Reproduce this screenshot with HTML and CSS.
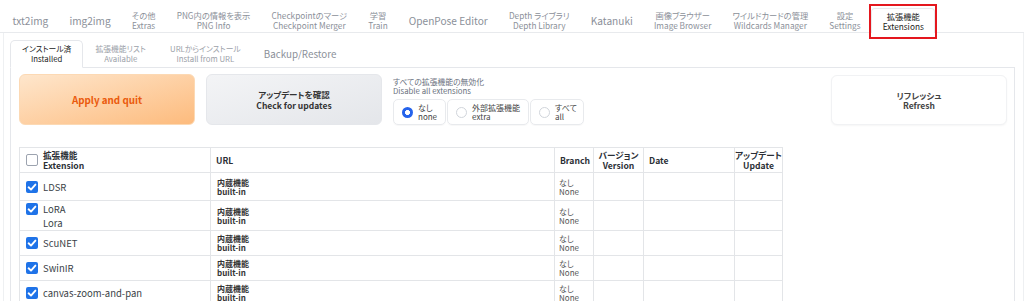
FILE: index.html
```html
<!DOCTYPE html>
<html lang="ja">
<head>
<meta charset="utf-8">
<title>Extensions</title>
<link rel="stylesheet" href="styles.css">
</head>
<body>
<nav class="topnav">
  <div class="tab one">txt2img</div>
  <div class="tab one">img2img</div>
  <div class="tab two"><span>その他</span><span>Extras</span></div>
  <div class="tab two"><span>PNG内の情報を表示</span><span>PNG Info</span></div>
  <div class="tab two"><span>Checkpointのマージ</span><span>Checkpoint Merger</span></div>
  <div class="tab two"><span>学習</span><span>Train</span></div>
  <div class="tab one">OpenPose Editor</div>
  <div class="tab two"><span>Depth ライブラリ</span><span>Depth Library</span></div>
  <div class="tab one">Katanuki</div>
  <div class="tab two"><span>画像ブラウザー</span><span>Image Browser</span></div>
  <div class="tab two"><span>ワイルドカードの管理</span><span>Wildcards Manager</span></div>
  <div class="tab two"><span>設定</span><span>Settings</span></div>
  <div class="tab two active"><span>拡張機能</span><span>Extensions</span><i class="mark"></i></div>
</nav>
<div class="outer">
  <div class="subnav">
    <div class="stab active"><span>インストール済</span><span>Installed</span></div>
    <div class="stab"><span>拡張機能リスト</span><span>Available</span></div>
    <div class="stab"><span>URLからインストール</span><span>Install from URL</span></div>
    <div class="stab single">Backup/Restore</div>
  </div>
  <div class="inner">
    <div class="actions">
      <button class="btn apply">Apply and quit</button>
      <button class="btn check"><span>アップデートを確認</span><span>Check for updates</span></button>
      <div class="radios">
        <div class="rlabel"><span>すべての拡張機能の無効化</span><span>Disable all extensions</span></div>
        <div class="ropts">
          <label class="ropt"><i class="dot on"></i><span class="rtext"><span>なし</span><span>none</span></span></label>
          <label class="ropt"><i class="dot"></i><span class="rtext"><span>外部拡張機能</span><span>extra</span></span></label>
          <label class="ropt"><i class="dot"></i><span class="rtext"><span>すべて</span><span>all</span></span></label>
        </div>
      </div>
      <button class="btn refresh"><span>リフレッシュ</span><span>Refresh</span></button>
    </div>
    <table class="ext">
      <colgroup>
        <col class="c1"><col class="c2"><col class="c3"><col class="c4"><col class="c5"><col class="c6">
      </colgroup>
      <thead>
        <tr>
          <th class="name"><span class="cb off"></span><span class="two-l"><span>拡張機能</span><span>Extension</span></span></th>
          <th class="left">URL</th>
          <th class="left">Branch</th>
          <th><span class="two-l c"><span>バージョン</span><span>Version</span></span></th>
          <th class="left">Date</th>
          <th><span class="two-l c"><span>アップデート</span><span>Update</span></span></th>
        </tr>
      </thead>
      <tbody>
        <tr class="r28">
          <td class="name"><span class="row1"><span class="cb"><svg viewBox="0 0 12 12"><polyline points="2.6,6.3 5,8.6 9.4,3.6"/></svg></span>LDSR</span></td>
          <td class="url"><span>内蔵機能</span><span>built-in</span></td>
          <td class="br"><span>なし</span><span>None</span></td>
          <td></td><td></td><td></td>
        </tr>
        <tr class="r30">
          <td class="name"><span class="row1"><span class="cb"><svg viewBox="0 0 12 12"><polyline points="2.6,6.3 5,8.6 9.4,3.6"/></svg></span>LoRA</span><span class="sub">Lora</span></td>
          <td class="url"><span>内蔵機能</span><span>built-in</span></td>
          <td class="br"><span>なし</span><span>None</span></td>
          <td></td><td></td><td></td>
        </tr>
        <tr>
          <td class="name"><span class="row1"><span class="cb"><svg viewBox="0 0 12 12"><polyline points="2.6,6.3 5,8.6 9.4,3.6"/></svg></span>ScuNET</span></td>
          <td class="url"><span>内蔵機能</span><span>built-in</span></td>
          <td class="br"><span>なし</span><span>None</span></td>
          <td></td><td></td><td></td>
        </tr>
        <tr>
          <td class="name"><span class="row1"><span class="cb"><svg viewBox="0 0 12 12"><polyline points="2.6,6.3 5,8.6 9.4,3.6"/></svg></span>SwinIR</span></td>
          <td class="url"><span>内蔵機能</span><span>built-in</span></td>
          <td class="br"><span>なし</span><span>None</span></td>
          <td></td><td></td><td></td>
        </tr>
        <tr>
          <td class="name"><span class="row1"><span class="cb"><svg viewBox="0 0 12 12"><polyline points="2.6,6.3 5,8.6 9.4,3.6"/></svg></span>canvas-zoom-and-pan</span></td>
          <td class="url"><span>内蔵機能</span><span>built-in</span></td>
          <td class="br"><span>なし</span><span>None</span></td>
          <td></td><td></td><td></td>
        </tr>
      </tbody>
    </table>
  </div>
</div>
</body>
</html>
```

FILE: styles.css
```css
* { box-sizing: border-box; }
html, body { margin: 0; padding: 0; background: #fff; }
body {
  font-family: "Noto Sans CJK JP", "Noto Sans", sans-serif;
  font-feature-settings: "palt";
  color: #374151;
  overflow: hidden;
  width: 1024px;
  height: 301px;
}

/* top navigation */
.topnav {
  display: flex;
  height: 33px;
  padding: 8px 0 0 2px;
  border-bottom: 1px solid #e8eaed;
}
.tab {
  position: relative;
  display: flex;
  flex-direction: column;
  justify-content: center;
  align-items: center;
  padding: 0 10.6px;
  height: 24px;
  color: #8b9099;
  white-space: nowrap;
}
.tab.one { font-size: 10.1px; }
.tab.two { font-size: 8.25px; line-height: 10px; }
.tab.active {
  color: #222;
  background: #fff;
  height: 25px;
  border: 1px solid #e8eaed;
  border-bottom: none;
  border-radius: 4px 4px 0 0;
  padding: 0 10.5px;
}
.mark {
  position: absolute;
  left: -3px;
  right: -3px;
  top: -5px;
  bottom: -6px;
  border: 2px solid #e4171e;
}

/* outer panel */
.outer {
  width: 1021px;
  height: 300px;
  margin-left: 3px;
  padding: 7px 8px 0 6px;
  border: 1px solid #eef0f2;
  border-top: none;
}
.subnav {
  display: flex;
  height: 27px;
}
.stab {
  display: flex;
  flex-direction: column;
  justify-content: center;
  align-items: center;
  padding: 0 12px;
  font-size: 7.8px;
  line-height: 10px;
  color: #9ca1a9;
  white-space: nowrap;
}
.stab.single { font-size: 9.8px; color: #8b9099; padding-left: 11px; }
.stab.active {
  color: #222;
  background: #fff;
  border: 1px solid #e5e7eb;
  border-bottom: 1px solid #fff;
  border-radius: 5px 5px 0 0;
  padding: 0 11px;
  height: 28px;
  position: relative;
  z-index: 1;
}
.inner {
  border: 1px solid #e5e7eb;
  height: 260px;
  padding: 6px 7px 0 8px;
}

/* action row */
.actions {
  display: grid;
  grid-template-columns: 176px 176px 1fr 176px;
  gap: 11px;
  height: 51px;
}
.btn {
  font-family: inherit;
  font-feature-settings: "palt";
  display: flex;
  flex-direction: column;
  justify-content: center;
  align-items: center;
  border-radius: 6px;
  height: 51px;
  margin: 0;
  padding: 0;
  cursor: pointer;
}
.apply {
  background: linear-gradient(to bottom right, #fee6cc, #fdbb7d);
  border: 1px solid #fcd9b4;
  color: #ea5a0c;
  font-size: 9.8px;
  font-weight: 700;
}
.check {
  background: linear-gradient(to bottom right, #f3f4f6, #e4e6ea);
  border: 1px solid #e5e7eb;
  color: #333;
  font-size: 8.5px;
  font-weight: 700;
  line-height: 10.5px;
}
.refresh {
  background: #fff;
  border: 1px solid #f1f2f4;
  box-shadow: 0 1px 2px rgba(0,0,0,0.04);
  color: #444;
  font-size: 8.5px;
  font-weight: 700;
  line-height: 10px;
  margin-top: 1px;
  height: 50px;
}
.radios {
  display: flex;
  flex-direction: column;
}
.rlabel {
  display: flex;
  flex-direction: column;
  font-size: 7.8px;
  line-height: 9px;
  color: #6b7280;
  padding-top: 3px;
  height: 25px;
}
.ropts {
  display: flex;
  gap: 1px;
}
.ropt {
  display: flex;
  align-items: center;
  gap: 5px;
  height: 26px;
  padding: 0 8px;
  border: 1px solid #e8eaed;
  border-radius: 5px;
  box-shadow: 0 1px 1px rgba(0,0,0,0.03);
  font-size: 8px;
  color: #444;
}
.ropt:last-child { padding-right: 6px; }
.rtext {
  display: flex;
  flex-direction: column;
  line-height: 9.5px;
}
.dot {
  display: block;
  width: 11px;
  height: 11px;
  border-radius: 50%;
  border: 1px solid #d1d5db;
  background: #fff;
}
.dot.on {
  border: none;
  background: radial-gradient(circle, #fff 0 2.2px, #2563eb 2.8px);
}

/* table */
.ext {
  margin-top: 22px;
  border-collapse: collapse;
  table-layout: fixed;
  width: 764px;
  font-size: 9.5px;
  color: #3a3f47;
}
.c1 { width: 191px; }
.c2 { width: 344px; }
.c3 { width: 39px; }
.c4 { width: 50px; }
.c5 { width: 91px; }
.c6 { width: 48px; }
.ext th, .ext td {
  border: 1px solid #e3e5e8;
  padding: 0;
  vertical-align: middle;
}
.ext th {
  height: 25px;
  font-weight: 700;
  font-size: 8.6px;
  color: #2b2f36;
  text-align: center;
  line-height: 10px;
}
.ext th.left { text-align: left; padding-left: 5px; }
.ext th.name { text-align: left; padding-left: 6px; }
.ext th.name, .ext th .two-l { white-space: nowrap; }
.ext th.name > * { vertical-align: middle; }
.two-l {
  display: inline-flex;
  flex-direction: column;
  text-align: left;
}
.two-l.c { align-items: center; }
.ext th .two-l { margin-left: 5px; }
.ext th:not(.name) .two-l { margin-left: 0; }
.ext td { height: 25px; }
.ext tr.r28 td { height: 28px; }
.ext tr.r30 td { height: 30px; }
.ext td.name {
  padding-left: 6px;
  white-space: nowrap;
}
.row1 {
  display: flex;
  align-items: center;
  gap: 5px;
  line-height: 14px;
}
.sub {
  display: block;
  padding-left: 17px;
  line-height: 14px;
}
.cb {
  display: inline-block;
  width: 12px;
  height: 12px;
  border-radius: 2px;
  background: #1f73e8;
  flex: none;
}
.cb svg {
  display: block;
  width: 12px;
  height: 12px;
  fill: none;
  stroke: #fff;
  stroke-width: 1.9;
  stroke-linecap: round;
  stroke-linejoin: round;
}
.cb.off {
  background: #fff;
  border: 1px solid #9ca3af;
}
.ext td.url, .ext td.br {
  padding-left: 6px;
  font-size: 8px;
  line-height: 9px;
}
.ext td.url span, .ext td.br span { display: block; }
.ext td.url { font-weight: 700; color: #333; }
.ext td.br { padding-left: 4px; color: #555; }
```
